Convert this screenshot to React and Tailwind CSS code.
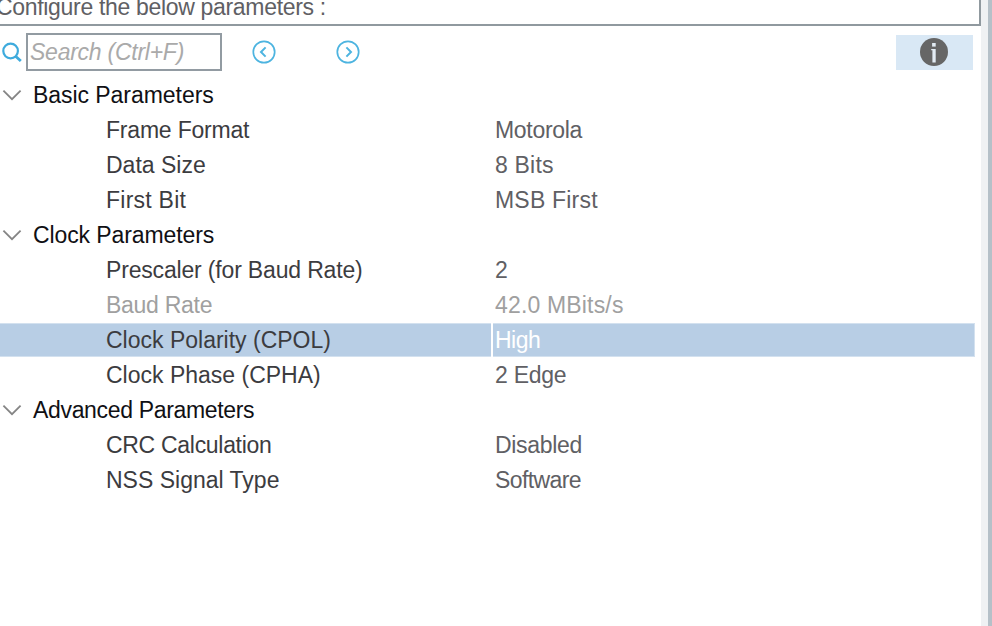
const GROUPS = [
  {
    title: "Basic Parameters",
    tracking: "tracking-[-0.05px]",
    rows: [
      { name: "Frame Format", value: "Motorola", nameClass: "tracking-[-0.2px]", valueClass: "tracking-[-0.3px]" },
      { name: "Data Size", value: "8 Bits", nameClass: "", valueClass: "tracking-[0.2px]" },
      { name: "First Bit", value: "MSB First", nameClass: "tracking-[0.25px]", valueClass: "tracking-[0.2px]" },
    ],
  },
  {
    title: "Clock Parameters",
    tracking: "tracking-[-0.1px]",
    rows: [
      { name: "Prescaler (for Baud Rate)", value: "2", nameClass: "tracking-[-0.17px]", valueClass: "" },
      { name: "Baud Rate", value: "42.0 MBits/s", nameClass: "tracking-[-0.28px]", valueClass: "tracking-[0.17px]", disabled: true },
      { name: "Clock Polarity (CPOL)", value: "High", nameClass: "", valueClass: "tracking-[-0.5px]", selected: true },
      { name: "Clock Phase (CPHA)", value: "2 Edge", nameClass: "", valueClass: "tracking-[-0.25px]" },
    ],
  },
  {
    title: "Advanced Parameters",
    tracking: "tracking-[-0.33px]",
    rows: [
      { name: "CRC Calculation", value: "Disabled", nameClass: "tracking-[-0.3px]", valueClass: "tracking-[-0.3px]" },
      { name: "NSS Signal Type", value: "Software", nameClass: "", valueClass: "tracking-[-0.6px]" },
    ],
  },
];

function SearchIcon() {
  return (
    <svg className="h-[22px] w-[22px] shrink-0" viewBox="0 0 22 22" fill="none" stroke="#3eabdd">
      <circle cx="10.6" cy="10" r="7.3" strokeWidth="2.2" />
      <path d="M15.6 15.2 L20.8 20" strokeWidth="2.8" />
    </svg>
  );
}

function ArrowButton({ direction }) {
  return (
    <button type="button" className="h-6 w-6 shrink-0" aria-label={direction}>
      <svg className="h-6 w-6" viewBox="0 0 24 24" fill="none" stroke="#4db4e0">
        <circle cx="12" cy="12" r="10.7" strokeWidth="1.7" />
        <path d={direction === "previous" ? "M13.6 7.4 L9 12 L13.6 16.6" : "M10.4 7.4 L15 12 L10.4 16.6"} strokeWidth="2" />
      </svg>
    </button>
  );
}

function InfoIcon() {
  return (
    <svg className="h-7 w-7" viewBox="0 0 28 28">
      <circle cx="14" cy="14" r="14" fill="#666666" />
      <rect x="12.1" y="5" width="3.6" height="3.6" fill="#e2ebf3" />
      <path d="M11.2 11 H15.7 V24.6 H12.4 V12.2 H11.2 Z" fill="#e2ebf3" />
    </svg>
  );
}

function Chevron() {
  return (
    <svg className="ml-[2px] h-5 w-5 shrink-0" viewBox="0 0 20 20" fill="none" stroke="#858585" strokeWidth="1.8">
      <path d="M1.4 5.6 L10 14.2 L18.6 5.6" />
    </svg>
  );
}

function Row({ row }) {
  const nameColor = row.disabled ? "text-[#a0a0a0]" : "text-[#3c3c3f]";
  const valueColor = row.disabled ? "text-[#a0a0a0]" : row.selected ? "text-white" : "text-[#606064]";
  const fill = row.selected ? "bg-[#b8cee5] border-[#d3e1ef]" : "border-transparent";
  return (
    <div className="flex h-[35px] items-start">
      <div className={`flex h-[34px] w-[491px] items-center border-y pl-[106px] ${fill} ${nameColor} ${row.nameClass}`}>{row.name}</div>
      <div className={`ml-[2px] flex h-[34px] w-[482px] items-center border-y border-r pl-[2px] ${fill} ${valueColor} ${row.valueClass}`}>{row.value}</div>
    </div>
  );
}

export default function App() {
  return (
    <div className="flex h-[626px] w-[992px] overflow-hidden bg-white font-['Liberation_Sans',Arial,sans-serif] text-[23px] leading-[26px] whitespace-nowrap">
      <main className="flex w-[981px] shrink-0 flex-col">
        <header className="flex h-[26px] shrink-0 items-end border-r-2 border-b-2 border-[#90999f] pb-[4px] text-[#606064]">
          <span className="-ml-[4px] tracking-[-0.32px]">Configure the below parameters :</span>
        </header>
        <div className="flex h-[52px] shrink-0 items-center pr-2">
          <SearchIcon />
          <input
            className="ml-[4px] h-[38px] w-[196px] border-2 border-[#929ba2] pl-[2px] italic tracking-[-0.25px] outline-none placeholder:text-[#aaaaaa] placeholder:opacity-100"
            placeholder="Search (Ctrl+F)"
          />
          <div className="ml-[30px] flex gap-[60px]">
            <ArrowButton direction="previous" />
            <ArrowButton direction="next" />
          </div>
          <button type="button" aria-label="info" className="ml-auto flex h-[35px] w-[77px] items-center justify-center bg-[#d9e8f5] pr-px">
            <InfoIcon />
          </button>
        </div>
        <div className="flex flex-col">
          {GROUPS.map((group) => (
            <section key={group.title}>
              <div className="flex h-[35px] items-center pb-[2px] text-[#101014]">
                <Chevron />
                <span className={`ml-[11px] ${group.tracking}`}>{group.title}</span>
              </div>
              {group.rows.map((row) => (
                <Row key={row.name} row={row} />
              ))}
            </section>
          ))}
        </div>
      </main>
      <div className="w-[7px] shrink-0 bg-[#eff1f3]" />
      <div className="w-[4px] shrink-0 bg-[#b5c0c8]" />
    </div>
  );
}
